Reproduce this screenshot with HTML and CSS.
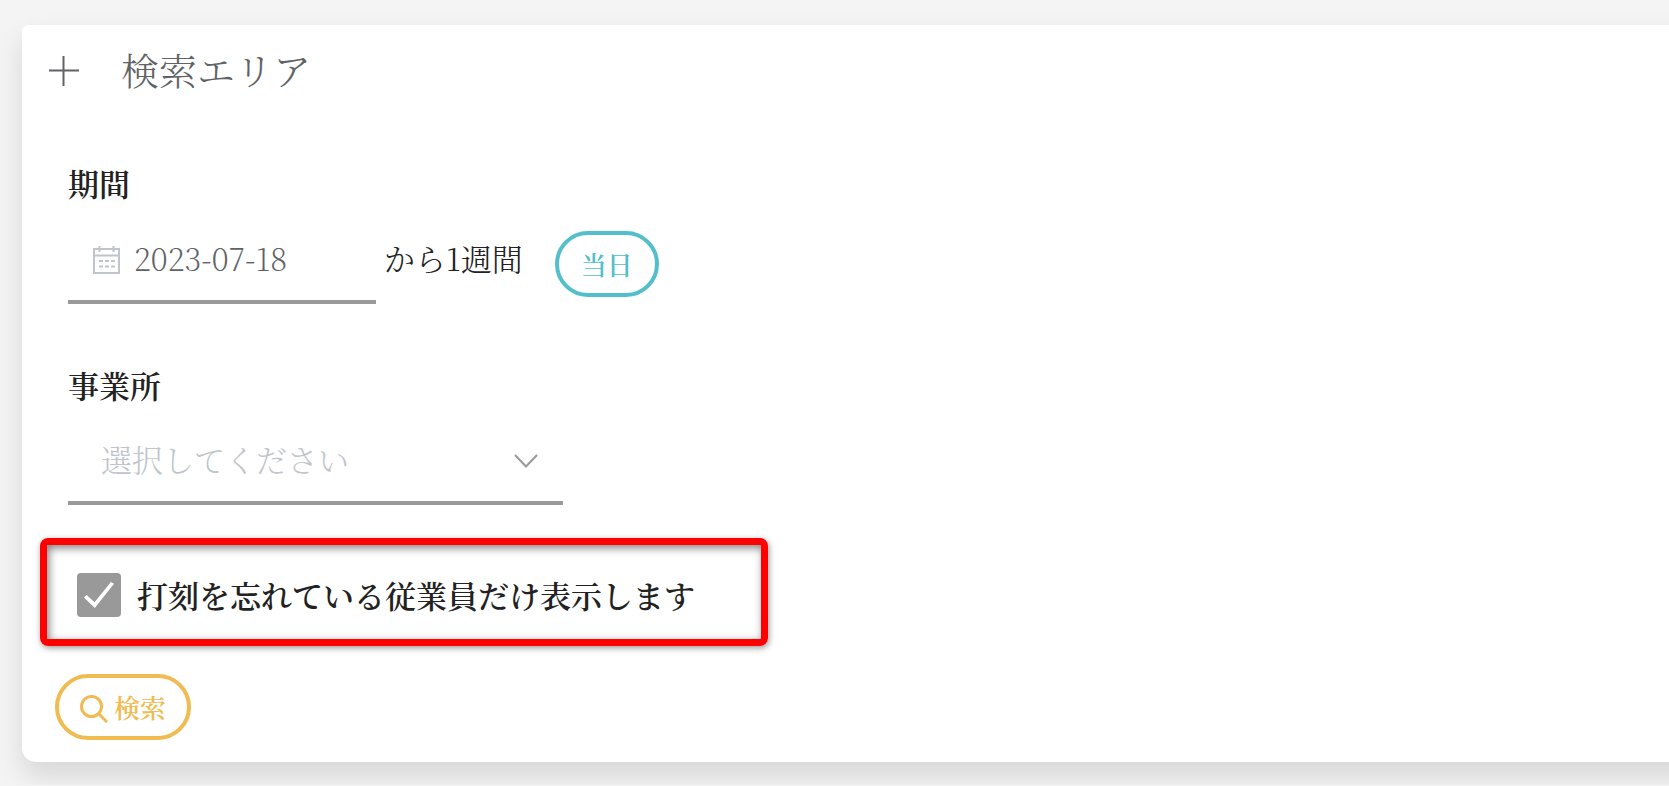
FILE: index.html
```
<!DOCTYPE html>
<html lang="ja">
<head>
  <meta charset="UTF-8" />
  <meta name="viewport" content="width=device-width, initial-scale=1.0" />
  <title>検索エリア</title>
  <link rel="stylesheet" href="styles.css">
</head>
<body>
  <form class="card">
    <button type="button" class="card-header">
      <svg class="plus" viewBox="0 0 30 30" aria-hidden="true"><path d="M0 14.500H30M14.500 0V30" /></svg>
      <span>検索エリア</span>
    </button>

    <div class="field">
      <label class="field-label" for="startDate">期間</label>
      <div class="date-row">
        <div class="date-box">
          <svg class="calendar" viewBox="0 0 28 28" aria-hidden="true">
            <path d="M2 3H27V27H2ZM2 9.500H27M7.500 0V6M21.500 0V6" />
            <path class="dots" d="M7 15H23M7 20.500H23" />
          </svg>
          <input type="text" id="startDate" value="2023-07-18">
        </div>
        <span class="date-suffix">から1週間</span>
        <button type="button" class="btn btn-today">当日</button>
      </div>
    </div>

    <div class="field">
      <label class="field-label" for="office">事業所</label>
      <div class="select-box">
        <select id="office">
          <option value="">選択してください</option>
        </select>
        <svg class="chevron" viewBox="0 0 24 14" aria-hidden="true"><path d="M1 1L12 12.500L23 1" /></svg>
      </div>
    </div>

    <div class="check-frame">
      <input type="checkbox" id="forgotOnly" checked>
      <label for="forgotOnly">打刻を忘れている従業員だけ表示します</label>
    </div>

    <button type="submit" class="btn btn-search">
      <svg class="magnifier" viewBox="0 0 28 28" aria-hidden="true"><circle cx="11.500" cy="11.500" r="10" /><path d="M18.500 18.500L27 27" /></svg>
      <span>検索</span>
    </button>
  </form>
</body>
</html>
```
FILE: styles.css
```
* {
  box-sizing: border-box;
}
body {
  margin: 0;
  padding: 25px 0 23px 22px;
  overflow-x: hidden;
  background-color: #f4f4f4;
  color: #222;
  font-family: "Noto Serif CJK JP", "Liberation Serif", "Noto Sans CJK JP", serif;
  font-size: 31px;
  font-weight: 200;
  line-height: 44px;
}
button, input, select {
  margin: 0;
  padding: 0;
  border: none;
  background: none;
  color: inherit;
  font: inherit;
}
button {
  cursor: pointer;
}
svg {
  flex: none;
  margin-top: 4px;
  fill: none;
  stroke: currentColor;
  stroke-width: 2;
}
.card {
  display: flex;
  flex-direction: column;
  align-items: flex-start;
  margin-right: -40px;
  padding: 16px 18px 22px;
  background-color: #fff;
  border-radius: 6px 0 0 14px;
  box-shadow: 0 14px 28px rgba(0, 0, 0, 0.12);
}
.card-header {
  display: flex;
  align-items: center;
  gap: 42px;
  padding-left: 9px;
  color: #606266;
  font-size: 38px;
  font-weight: 300;
  line-height: 56px;
}
.plus {
  width: 30px;
  height: 30px;
}
.field {
  padding: 64px 0 0 28px;
}
.field + .field {
  padding-top: 59px;
}
.field-label {
  display: block;
  font-weight: 600;
}
.date-row {
  display: flex;
  align-items: center;
  margin-top: 21px;
}
.date-box {
  display: flex;
  align-items: center;
  gap: 14px;
  width: 308px;
  height: 78px;
  padding: 0 24px 10px;
  border-bottom: 4px solid #999;
  color: #606266;
}
.date-box input {
  width: 100%;
  min-width: 0;
}
.calendar {
  width: 28px;
  height: 28px;
  color: #c0c4cc;
}
.dots {
  stroke-dasharray: 4 2;
}
.date-suffix {
  margin: 0 32px 14px 8px;
  font-weight: 300;
}
.btn {
  display: flex;
  align-items: center;
  justify-content: center;
  gap: 6px;
  height: 66px;
  padding: 0 22px;
  border: 4px solid;
  border-radius: 33px;
  font-size: 26px;
  font-weight: 600;
  white-space: nowrap;
}
.btn-today {
  margin-bottom: 2px;
  color: #52bfca;
}
.btn-search {
  margin: 28px 0 0 15px;
  padding: 0 21px;
  color: #f0bb50;
}
.magnifier {
  width: 28px;
  height: 28px;
  stroke-width: 3;
}
.select-box {
  display: flex;
  align-items: center;
  width: 495px;
  height: 78px;
  margin-top: 20px;
  padding: 0 25px 10px 33px;
  border-bottom: 4px solid #999;
  color: #999;
}
.select-box select {
  flex: 1;
  appearance: none;
  color: #c0c4cc;
  font-weight: 300;
}
.chevron {
  width: 24px;
  height: 14px;
}
.check-frame {
  display: flex;
  align-items: center;
  gap: 16px;
  width: 728px;
  max-width: 100%;
  height: 108px;
  margin-top: 33px;
  padding: 6px 30px 0;
  border: 7px solid #f00;
  border-radius: 8px;
  box-shadow: 1px 2px 6px rgba(0, 0, 0, 0.4), inset 2px 3px 8px rgba(0, 0, 0, 0.5);
  font-weight: 600;
}
.check-frame input {
  display: grid;
  place-items: center;
  width: 44px;
  height: 44px;
  border-radius: 4px;
  background-color: #fff;
  border: 2px solid #999;
  appearance: none;
}
.check-frame input:checked {
  background-color: #999;
}
/* check mark */
.check-frame input:checked::before {
  content: "";
  width: 30px;
  height: 26px;
  background-color: #fff;
  clip-path: polygon(0 60%, 9% 50%, 35% 78%, 90% 0, 100% 7%, 36% 100%);
}
```
